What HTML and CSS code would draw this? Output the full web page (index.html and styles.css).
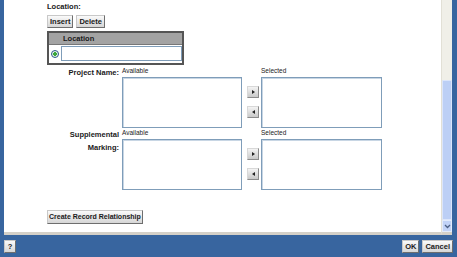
FILE: index.html
```html
<!DOCTYPE html>
<html lang="en">
<head>
    <meta charset="UTF-8">
    <title>Create Record Relationship</title>
    <link rel="stylesheet" href="styles.css">
</head>
<body>

    <div class="dialog">
        <div class="main">
            <div class="content">
                <div class="field-label">Location:</div>

                <div class="btn-row">
                    <button class="btn">Insert</button>
                    <button class="btn">Delete</button>
                </div>

                <table class="loc-table">
                    <tr><th></th><th>Location</th></tr>
                    <tr>
                        <td class="radio-cell"><span class="radio"></span></td>
                        <td><input type="text" class="loc-input"></td>
                    </tr>
                </table>

                <div class="pick">
                    <div class="pick-label">Project Name:</div>
                    <div class="caption avail">Available</div>
                    <div class="caption sel">Selected</div>
                    <div class="list avail"></div>
                    <div class="arrows">
                        <button class="arrow"><span class="tri-right"></span></button>
                        <button class="arrow"><span class="tri-left"></span></button>
                    </div>
                    <div class="list sel"></div>
                </div>

                <div class="pick">
                    <div class="pick-label">Supplemental Marking:</div>
                    <div class="caption avail">Available</div>
                    <div class="caption sel">Selected</div>
                    <div class="list avail"></div>
                    <div class="arrows">
                        <button class="arrow"><span class="tri-right"></span></button>
                        <button class="arrow"><span class="tri-left"></span></button>
                    </div>
                    <div class="list sel"></div>
                </div>

                <button class="btn create">Create Record Relationship</button>
            </div>

            <div class="scrollbar">
                <div class="thumb"></div>
                <div class="scroll-down">
                    <svg width="7" height="5" viewBox="0 0 7 5"><path d="M1 1 L3.5 3.5 L6 1" fill="none" stroke="#4d6185" stroke-width="1.3"/></svg>
                </div>
            </div>
        </div>

        <div class="footer">
            <button class="btn help">?</button>
            <div class="footer-right">
                <button class="btn">OK</button>
                <button class="btn">Cancel</button>
            </div>
        </div>
    </div>

</body>
</html>
```

FILE: styles.css
```css
* {
    margin: 0;
    padding: 0;
    box-sizing: border-box;
}

body {
    font-family: 'Liberation Sans', Arial, sans-serif;
    width: 457px;
    height: 257px;
    overflow: hidden;
    background: #38659f;
}

.dialog {
    display: flex;
    flex-direction: column;
    height: 257px;
}

.main {
    display: flex;
    height: 235px;
    padding: 0 5px 0 4px;
    background: #38659f;
}

.content {
    flex: 1;
    background: #ffffff;
    padding: 3px 0 0 43px;
    border-bottom: 3px solid #d4d0c8;
}

.field-label {
    font-size: 7.5px;
    font-weight: bold;
    color: #1a1a1a;
    height: 12px;
    line-height: 8px;
}

.btn {
    font-family: 'Liberation Sans', Arial, sans-serif;
    font-size: 7.5px;
    font-weight: bold;
    color: #1a1a1a;
    height: 13px;
    padding: 0 2px;
    white-space: nowrap;
    border: 1px solid #8a8a8a;
    border-color: #c8c8c8 #6e6e6e #6e6e6e #c8c8c8;
    background: linear-gradient(#fafafa, #d6d6d6);
}

.btn-row {
    display: flex;
    gap: 3px;
    height: 16px;
}

.loc-table {
    width: 137px;
    border-collapse: collapse;
    border: 2px solid #555555;
}

.loc-table th {
    background: #a3a3a3;
    font-size: 7.5px;
    font-weight: bold;
    color: #1a1a1a;
    text-align: left;
    height: 12px;
    padding: 0 0 0 2px;
    border-bottom: 1px solid #777777;
}

.loc-table td {
    height: 17px;
    padding: 0;
}

.radio-cell {
    width: 13px;
    text-align: center;
}

.radio {
    display: inline-block;
    width: 8px;
    height: 8px;
    border-radius: 50%;
    border: 1px solid #2a5a8a;
    background: radial-gradient(circle, #3aa83a 0 1.6px, #e8f2e8 2px);
    vertical-align: middle;
}

.loc-input {
    display: block;
    width: 100%;
    height: 15px;
    border: 1px solid #7f9db9;
    background: #ffffff;
}

.pick {
    display: grid;
    grid-template-columns: 75px 120px 19px 121px;
    grid-template-rows: 10px 51px;
    margin-top: 2px;
}

.pick + .pick {
    margin-top: 1px;
}

.pick-label {
    grid-column: 1;
    grid-row: 1 / 3;
    font-size: 7.5px;
    font-weight: bold;
    color: #1a1a1a;
    text-align: right;
    padding-right: 3px;
    line-height: 13px;
    margin-top: -1px;
}

.caption {
    grid-row: 1;
    font-size: 6.5px;
    color: #222222;
    line-height: 8px;
}

.avail {
    grid-column: 2;
}

.sel {
    grid-column: 4;
}

.list {
    grid-row: 2;
    border: 1px solid #7f9db9;
    box-shadow: inset 1px 1px 0 #c8d6e4;
    background: #ffffff;
}

.arrows {
    grid-column: 3;
    grid-row: 2;
    display: flex;
    flex-direction: column;
    justify-content: center;
    align-items: flex-start;
    gap: 8px;
    padding-left: 5px;
}

.arrow {
    width: 12px;
    height: 12px;
    border: 1px solid #b0b0b0;
    border-color: #d8d8d8 #8c8c8c #8c8c8c #d8d8d8;
    background: linear-gradient(#f4f4f4, #c9c9c9);
    display: flex;
    align-items: center;
    justify-content: center;
}

.tri-right {
    width: 0;
    height: 0;
    border-top: 2.5px solid transparent;
    border-bottom: 2.5px solid transparent;
    border-left: 3px solid #222222;
}

.tri-left {
    width: 0;
    height: 0;
    border-top: 2.5px solid transparent;
    border-bottom: 2.5px solid transparent;
    border-right: 3px solid #222222;
}

.create {
    margin-top: 20px;
    height: 14px;
    font-size: 7px;
    padding: 0 1px;
}

.scrollbar {
    width: 11px;
    background: #f0efe8;
    border-left: 1px solid #e2e0d6;
    border-bottom: 3px solid #d4d0c8;
    display: flex;
    flex-direction: column;
    justify-content: flex-end;
}

.thumb {
    height: 140px;
    background: #bccff5;
    border: 1px solid #dbe5fa;
    border-radius: 1px;
}

.scroll-down {
    height: 12px;
    background: #c2d3f7;
    border: 1px solid #e3ebfb;
    display: flex;
    align-items: center;
    justify-content: center;
}

.footer {
    flex: 1;
    display: flex;
    justify-content: space-between;
    align-items: center;
    padding: 0 4px 0 4px;
    background: #38659f;
}

.footer-right {
    display: flex;
    gap: 3px;
}

.help {
    width: 12px;
    padding: 0;
}
```
